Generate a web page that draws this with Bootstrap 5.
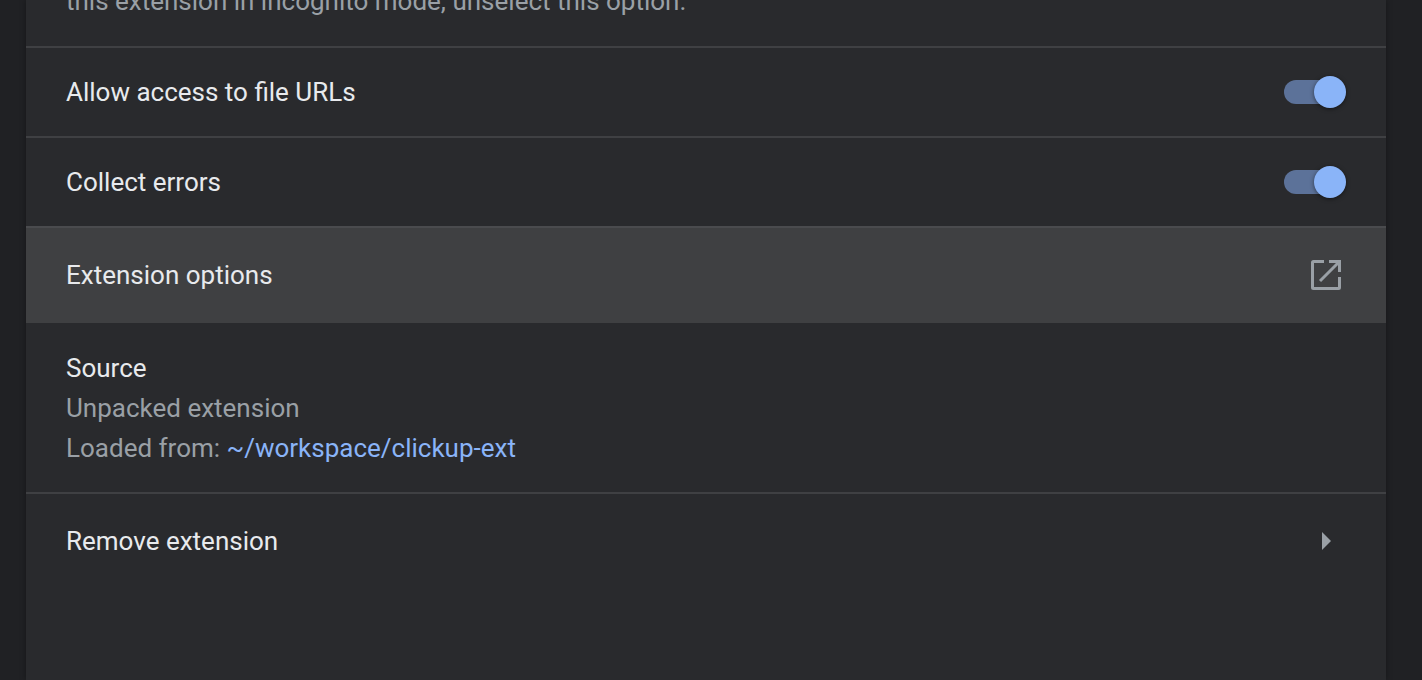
<!DOCTYPE html>
<html lang="en">
<head>
  <meta charset="UTF-8">
  <meta name="viewport" content="width=device-width, initial-scale=1.0">
  <title>Extension details</title>
  <link href="https://cdn.jsdelivr.net/npm/bootstrap@5.3.0/dist/css/bootstrap.min.css" rel="stylesheet">
  <style>
    html, body {
      height: 680px;
      overflow: hidden;
    }
    body {
      background: #202124;
      font-family: Roboto, "Liberation Sans", sans-serif;
      font-size: 26px;
      line-height: 40px;
      color: #e8eaed;
    }
    .page-wrap {
      padding: 0 36px 0 26px;
      height: 680px;
    }
    .details-panel {
      background: #292a2d;
      height: 680px;
      box-shadow: 0 0 6px rgba(0, 0, 0, .35);
    }
    .setting-row {
      height: 90px;
      padding: 0 40px;
      border-top: 2px solid #3f4043;
    }
    .remove-row {
      height: 96px;
    }
    .top-clip {
      height: 46px;
      padding: 0 40px 25px;
      overflow: hidden;
      color: #9aa0a6;
    }
    .options-row {
      height: 97px;
      background: #3f4042;
      border-top: 2px solid #4a4b4e;
      padding: 0 44px 2px 40px;
    }
    .source-block {
      padding: 25px 40px 25px;
      height: 169px;
    }
    .muted-text { color: #9aa0a6; }
    .path-link { color: #8ab4f8; text-decoration: none; }
    .toggle-track {
      position: relative;
      width: 62px;
      height: 24px;
    }
    .toggle-track::before {
      content: "";
      position: absolute;
      left: 0;
      right: 2px;
      top: 0;
      bottom: 0;
      border-radius: 12px;
      background: #5c7299;
    }
    .toggle-knob {
      position: absolute;
      right: 0;
      top: -4px;
      width: 32px;
      height: 32px;
      border-radius: 50%;
      background: #8ab4f8;
      box-shadow: 0 1px 4px rgba(0, 0, 0, .5);
    }
    .row-icon { display: block; }
  </style>
</head>
<body>
  <div class="page-wrap">
    <div class="details-panel">
      <div class="top-clip d-flex align-items-end">
        <span class="text-nowrap">this extension in incognito mode, unselect this option.</span>
      </div>
      <div class="setting-row d-flex align-items-center justify-content-between">
        <span>Allow access to file URLs</span>
        <div class="toggle-track"><div class="toggle-knob"></div></div>
      </div>
      <div class="setting-row d-flex align-items-center justify-content-between">
        <span>Collect errors</span>
        <div class="toggle-track"><div class="toggle-knob"></div></div>
      </div>
      <div class="options-row d-flex align-items-center justify-content-between">
        <span>Extension options</span>
        <svg class="row-icon" width="32" height="32" viewBox="0 0 32 32" fill="none" stroke="#9aa0a6" stroke-width="3">
          <path d="M14 2.5H3.5a1 1 0 0 0-1 1v25a1 1 0 0 0 1 1h25a1 1 0 0 0 1-1V18"/>
          <path d="M19 2.5h10.5V13"/>
          <path d="M29 3 10 22"/>
        </svg>
      </div>
      <div class="source-block">
        <div>Source</div>
        <div class="muted-text">Unpacked extension</div>
        <div class="muted-text">Loaded from: <a class="path-link" href="#">~/workspace/clickup-ext</a></div>
      </div>
      <div class="setting-row remove-row d-flex align-items-center justify-content-between">
        <span>Remove extension</span>
        <svg class="row-icon" width="40" height="20" viewBox="0 0 40 20">
          <path d="M16 1l9 9-9 9z" fill="#9aa0a6"/>
        </svg>
      </div>
    </div>
  </div>
  <script src="https://cdn.jsdelivr.net/npm/bootstrap@5.3.0/dist/js/bootstrap.bundle.min.js"></script>
</body>
</html>
